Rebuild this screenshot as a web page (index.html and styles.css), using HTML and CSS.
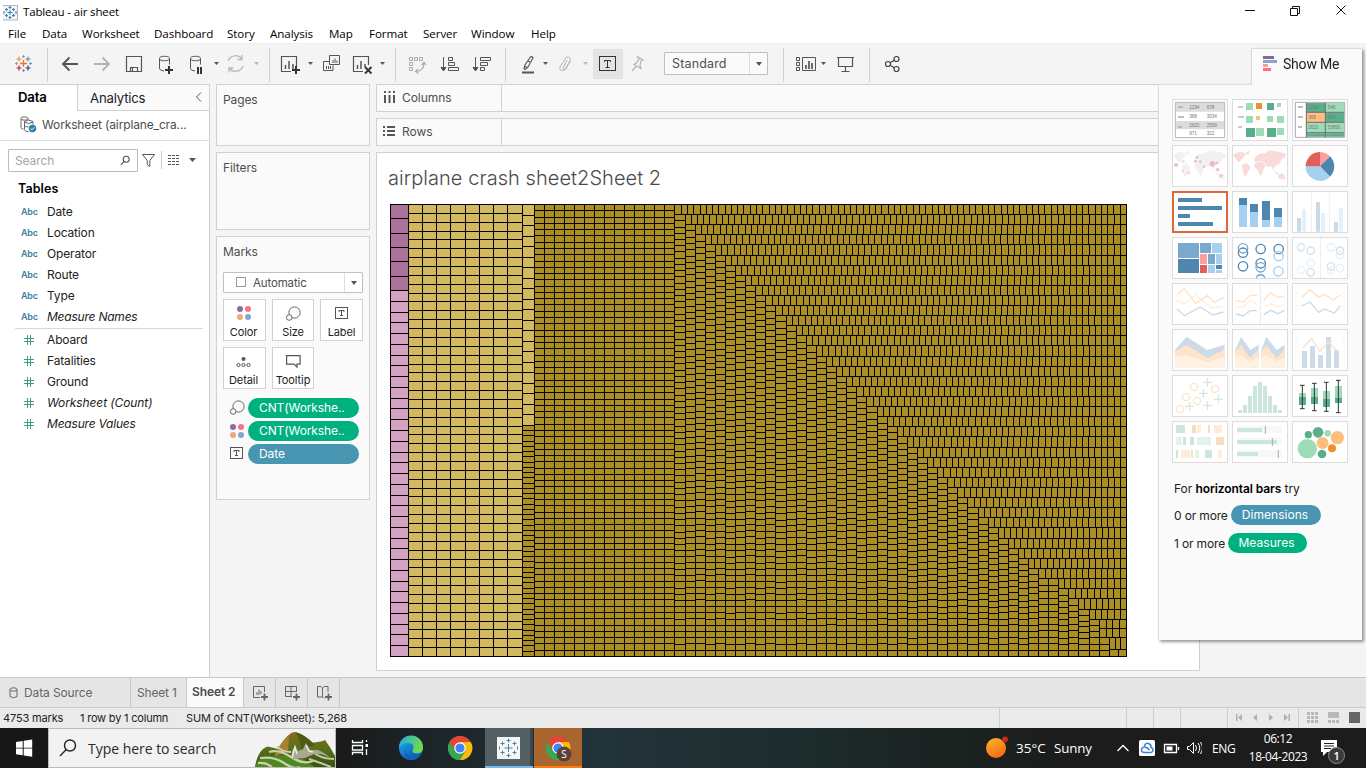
FILE: index.html
```html
<!DOCTYPE html>
<html lang="en">
<head>
<meta charset="utf-8">
<title>Tableau - air sheet</title>
<link rel="stylesheet" href="styles.css">
</head>
<body>
<svg width="0" height="0" class="defs">
  <defs>
    <g id="size"><circle cx="9.5" cy="6.5" r="5.6"/><circle cx="4.2" cy="11.5" r="2.8" fill="#fafafa"/></g>
    <g id="dots"><circle cx="3" cy="3" r="3" fill="#8a6f9a"/><circle cx="11" cy="3" r="3" fill="#fb7185"/><circle cx="3" cy="11" r="3" fill="#f4a57c"/><circle cx="11" cy="11" r="3" fill="#85a5cd"/></g>
    <g id="tbox"><rect x=".5" y=".5" width="12" height="11" fill="none" stroke="#555"/><path d="M4 5V3.500h5V5M6.500 3.500v5M5 8.500H8" fill="none" stroke="#555"/></g>
    <g id="chrome">
      <circle r="12" fill="#34a853"/><path d="M-10.4-6A12 12 0 0 1 10.4-6L0-6-5.2 3Z" fill="#ea4335"/><path d="M10.800-6A12 12 0 0 1 0 12L5.200 3 0-6Z" fill="#fbbc05"/><path d="M-10.400-6-5.200 3 0 6 5.200 3 0 12A12 12 0 0 1-10.400-6" fill="#34a853"/><circle r="5.8" fill="#fff"/><circle r="4.6" fill="#4285f4"/>
    </g>
    <g id="land">
      <path d="M8 26l14-6 14 2 6 5-6 8-8 9-6 8-6-4-7-10-6-6z"/><path d="M42 20l12-3-4 10-6 4z"/><path d="M30 60l12-6 13 12-5 12-8 14-5 3-4-16z"/><path d="M66 60l10-10 16 2 9 9-6 12-5 15-6 4-6-16-8-6z"/><path d="M66 48l2-10 12-12 20-2 10-8 30 4 22 6-2 10-10 6-8 14-12 6-6 14-6-12-12 2-10-14-12-4-14 4z"/><path d="M126 76l10 8 8 2-10 3z"/><path d="M138 92l12-8 10 8-4 13-8-4-8 1z"/>
    </g>
    <linearGradient id="sun" x1="0" y1="0" x2=".5" y2="1"><stop offset="0" stop-color="#f7b733"/><stop offset="1" stop-color="#f96d12"/></linearGradient>
    <linearGradient id="edge" x1="0" y1="0" x2=".6" y2="1"><stop offset="0" stop-color="#28b5e8"/><stop offset="1" stop-color="#0b57b5"/></linearGradient>
    <linearGradient id="wave" x1="0" y1="0" x2="1" y2=".3"><stop offset="0" stop-color="#1fa8ea"/><stop offset="1" stop-color="#6cda4c"/></linearGradient>
    <linearGradient id="grass" x1="0" y1="0" x2="0" y2="1"><stop offset="0" stop-color="#8a6a22"/><stop offset=".5" stop-color="#55701c"/><stop offset="1" stop-color="#35520f"/></linearGradient>
  </defs>
</svg>

<header class="titlebar">
  <svg class="app-icon" width="16" height="20" viewBox="0 0 16 20"><rect x="-.5" y="3.500" width="15" height="14.500" fill="#f6f6f6" stroke="#b5b5b5"/><path d="M7 8v5M4.500 10.500h5M7 4v3M5.500 5.500h3M7 14v3M5.500 15.500h3M3.500 6v3M2 7.500h3M10.500 6v3M9 7.500h3M3.500 12v3M2 13.500h3M10.500 12v3M9 13.500h3M1 9v3M13 9v3" stroke="#3a86b8" stroke-width="1.100"/></svg>
  <span class="app-name">Tableau - air sheet</span>
  <svg class="win-controls" width="140" height="23" viewBox="1226 0 140 23" fill="none" stroke="#111"><path d="M1245 10.500h10"/><path d="M1290.500 8.500h7v7h-7zM1292.500 8.500v-2h7v7h-2"/><path d="M1336.500 5.500l9 9M1345.500 5.500l-9 9"/></svg>
</header>

<nav class="menu">
  <span class="m1">File</span><span class="m2">Data</span><span class="m3">Worksheet</span><span class="m4">Dashboard</span><span class="m5">Story</span><span class="m6">Analysis</span><span class="m7">Map</span><span class="m8">Format</span><span class="m9">Server</span><span class="m10">Window</span><span class="m11">Help</span>
</nav>

<div class="toolbar">
  <svg class="grp" width="47" height="41" viewBox="0 43 47 41" fill="none">
    <path d="M23.500 60v7M20 63.500h7" stroke="#e8762c" stroke-width="1.300"/><path d="M19 56.500v5M16.500 59h5" stroke="#eb912b"/><path d="M28 56.500v5M25.500 59h5" stroke="#59879b"/><path d="M19 65.500v5M16.500 68h5" stroke="#c72035" stroke-width="1.200"/><path d="M28 65.500v5M25.500 68h5" stroke="#1f447e" stroke-width="1.200"/><path d="M23.500 55v3M22 56.500h3M16.500 62v3M15 63.500h3" stroke="#7fa8b8"/><path d="M30.500 62v3M29 63.500h3M23.500 69v3M22 70.500h3" stroke="#7199a6"/>
  </svg>
  <svg class="grp" width="222" height="41" viewBox="47 43 222 41" fill="none" stroke="#555">
    <path d="M78 64H63M69.500 57.500 63 64l6.500 6.500" stroke-width="1.900"/>
    <path d="M94 64h15M102.500 57.500 109 64l-6.500 6.500" stroke="#b4b4b4" stroke-width="1.900"/>
    <path d="M126.500 56.500h15v15h-15zM130.500 71.500v-4h7v4M132.500 68v3" stroke-width="1.200"/>
    <g id="db"><ellipse cx="164.500" cy="58.500" rx="5" ry="2.200"/><path d="M159.500 58.500v10q0 2 4.500 2.500M169.500 58.500v6"/></g><path d="M169 66v8M165 70h8" stroke="#333" stroke-width="2"/>
    <use href="#db" x="31"/><path d="M198 67v7M201 67v7" stroke="#333" stroke-width="2"/>
    <path d="M214 62h5l-2.500 3z" fill="#555" stroke="none"/>
    <path d="M228 61a8 8 0 0 1 14-2M243 66a8 8 0 0 1-14 2M242 55v4.500h-4.500M229 72.500V68h4.500" stroke="#b8b8b8" stroke-width="1.300"/>
    <path d="M254 62h5l-2.500 3z" fill="#b8b8b8" stroke="none"/>
  </svg>
  <svg class="grp" width="126" height="41" viewBox="269 43 126 41" fill="none" stroke="#555">
    <path d="M291 71.500h-9.500v-15h15V67" stroke-width="1.200"/><path d="M285.500 69v-4M289 69v-8M293 69v-5" stroke-width="1.500"/><path d="M296 66v8M292 70h8" stroke="#333" stroke-width="2"/><path d="M308 62h5l-2.500 3z" fill="#555" stroke="none"/>
    <path d="M329.500 55.500h10v9h-10zM329 61.500h-5.500v9h9.500v-5M333 63v-3M335 63v-4.500M337 63v-2.500M326.500 69v-3M328.500 69v-3M330.500 69v-3"/>
    <path d="M363 71.500h-9.500v-15h15V65" stroke-width="1.200"/><path d="M357.500 69v-4M361 69v-8M365 67v-3" stroke-width="1.500"/><path d="M365 67l6.500 6.500M371.500 67l-6.500 6.500" stroke="#333" stroke-width="1.900"/><path d="M380 62h5l-2.500 3z" fill="#555" stroke="none"/>
  </svg>
  <svg class="grp" width="110" height="41" viewBox="395 43 110 41" fill="none" stroke="#555">
    <g stroke="#aaa"><path d="M409.500 57.500h3v3h-3zM414.500 57.500h3v3h-3zM419.500 57.500h3v3h-3zM409.500 62.500h3v3h-3zM409.500 67.500h3v3h-3z"/><path d="M424 63c0 5-3 8-8 8.500M421.500 65l2.500-2.500 2 2.500M418 69l-2.500 2.500 3 2" stroke-width="1.200"/></g>
    <path d="M443.500 57v13M441 67.500h5l-2.500 3.500z" fill="#555"/><path d="M448.500 57.500h4v3h-4zM448.500 62.500h6v3h-6zM448.500 67.500h10v3h-10z"/>
    <path d="M475.500 57v13M473 67.500h5l-2.500 3.500z" fill="#555"/><path d="M480.500 57.500h10v3h-10zM480.500 62.500h7v3h-7zM480.500 67.500h4v3h-4z"/>
  </svg>
  <svg class="grp" width="159" height="41" viewBox="505 43 159 41" fill="none" stroke="#555">
    <path d="M530 57.500q2-2 3 .5l-5 9-3 2.500-1-1 1-3.500zM524.500 66l3.500 2M528 61l3 1.500" stroke-width="1.100"/><path d="M522 72.500h12" stroke-width="2"/><path d="M543 62h5l-2.500 3z" fill="#555" stroke="none"/>
    <path d="M567 60l-4 8q0 3 2.500 1.500l5-9q0-4-4-3.500l-6 9q-2 4 1 4.500t5-3.500l4-7" stroke="#b4b4b4"/><path d="M583 62h5l-2.500 3z" fill="#b8b8b8" stroke="none"/>
    <path d="M593 49h30v30h-30z" fill="#e4e4e4" stroke="none"/><rect x="599.500" y="56.500" width="16" height="14" stroke="#333"/><path d="M604.500 62v-1.500h6V62M607.500 60v8M605.500 67.500h4" stroke="#333"/>
    <path d="M637 56.500l6 3.500-2 1-1 4 1 3.500-7-4 3-2 2-4zM636.500 66l-4.500 5" stroke="#b4b4b4" stroke-width="1.200"/>
  </svg>
  <div class="select std"><span>Standard</span><i></i></div>
  <svg class="grp" width="86" height="41" viewBox="783 43 86 41" fill="none" stroke="#555"><path d="M796.500 57.500h3v3h-3zM796.500 62.500h3v3h-3zM796.500 67.500h3v3h-3zM802.500 57.500h13v13h-13z"/><path d="M806 69v-4M809 69v-8M812 69v-6" stroke-width="1.700"/><path d="M821 62h5l-2.500 3z" fill="#555" stroke="none"/><path d="M837 57.500h17M838.500 58v8.500h14V58M845.500 67v4.500M841.500 71.500h8" stroke-width="1.200"/></svg>
  <svg class="grp" width="40" height="41" viewBox="869 43 40 41" fill="none" stroke="#444" stroke-width="1.200"><circle cx="888" cy="64" r="2.500"/><circle cx="896.500" cy="59" r="2.500"/><circle cx="896.500" cy="69" r="2.500"/><path d="M890.200 62.800l4-2.500M890.200 65.200l4 2.500"/></svg>
</div>

<main class="work">
  <aside class="side">
    <div class="side-tabs"><b>Data</b><span>Analytics<svg width="8" height="12" viewBox="0 0 8 12" fill="none" stroke="#555"><path d="M6 .5 1.500 5 6 9.500"/></svg></span></div>
    <div class="source"><svg width="17" height="17" viewBox="0 0 17 17" fill="none" stroke="#666"><ellipse cx="4.500" cy="2.500" rx="3.500" ry="1.700"/><path d="M1 2.500v9q0 1.500 2.500 1.700M8 2.500v1M4.500 5.500v8q0 2 4 2.300M4.500 5.500q4-3 8.500 0v3M4.500 6q4 3 8.500 0M4.500 10q2 1 4 1"/><circle cx="12.500" cy="12.500" r="3.700" fill="#2d7fa3" stroke="none"/><path d="M10.700 12.500l1.300 1.300 2.300-2.500" stroke="#fff"/></svg><span>Worksheet (airplane_cra...</span></div>
    <div class="search-row">
      <div class="search"><span>Search</span><svg width="11" height="11" viewBox="0 0 11 11" fill="none" stroke="#555" stroke-width="1.100"><circle cx="6.200" cy="4.200" r="3"/><path d="M4.200 6.400.8 9.800"/></svg></div>
      <svg width="60" height="24" viewBox="141 149 60 24" fill="none" stroke="#555"><path d="M142.500 154.500h12l-4.700 6v6l-2.600-2v-4z"/><path d="M161.500 151v18" stroke="#ccc"/><path d="M168 155.500h12M168 158.500h12M168 161.500h12M168 164.500h12" stroke-dasharray="3 1"/><path d="M189 158h7l-3.500 4z" fill="#555" stroke="none"/></svg>
    </div>
    <h2>Tables</h2>
    <ul class="fields dims">
      <li><em>Abc</em>Date</li><li><em>Abc</em>Location</li><li><em>Abc</em>Operator</li><li><em>Abc</em>Route</li><li><em>Abc</em>Type</li><li class="it"><em>Abc</em>Measure Names</li>
    </ul>
    <ul class="fields">
      <li><svg class="hash" viewBox="0 0 10 10"><path d="M3.500 0v10M6.500 0v10M0 3.500h10M0 6.500h10"/></svg>Aboard</li><li><svg class="hash" viewBox="0 0 10 10"><path d="M3.500 0v10M6.500 0v10M0 3.500h10M0 6.500h10"/></svg>Fatalities</li><li><svg class="hash" viewBox="0 0 10 10"><path d="M3.500 0v10M6.500 0v10M0 3.500h10M0 6.500h10"/></svg>Ground</li><li class="it wc"><svg class="hash" viewBox="0 0 10 10"><path d="M3.500 0v10M6.500 0v10M0 3.500h10M0 6.500h10"/></svg>Worksheet (Count)</li><li class="it"><svg class="hash" viewBox="0 0 10 10"><path d="M3.500 0v10M6.500 0v10M0 3.500h10M0 6.500h10"/></svg>Measure Values</li>
    </ul>
  </aside>

  <section class="cards">
    <div class="card pages">Pages</div>
    <div class="card filters">Filters</div>
    <div class="card marks">Marks
      <div class="select auto"><svg width="11" height="11"><rect x=".5" y=".5" width="9" height="9" fill="none" stroke="#999"/></svg><span>Automatic</span><i></i></div>
      <div class="mark-grid">
        <div><svg width="14" height="14"><use href="#dots"/></svg>Color</div>
        <div><svg width="16" height="15" fill="none" stroke="#666"><use href="#size"/></svg>Size</div>
        <div><svg class="lb" width="14" height="13"><use href="#tbox"/></svg>Label</div>
        <div><svg class="dt" width="15" height="12" fill="none" stroke="#555"><circle cx="7.500" cy="3" r="2" fill="#555" stroke="none"/><circle cx="2.500" cy="9" r="1.600"/><circle cx="7.500" cy="9" r="1.600"/><circle cx="12.500" cy="9" r="1.600"/></svg>Detail</div>
        <div><svg class="lb" width="15" height="13" fill="none" stroke="#555" stroke-width="1.200"><path d="M.6.6h13.500v8.500H11v3L8 9.100H.6z"/></svg>Tooltip</div>
      </div>
      <div class="pills">
        <div><svg width="16" height="15" fill="none" stroke="#666"><use href="#size"/></svg><span class="pill g">CNT(Workshe..</span></div>
        <div><svg width="16" height="14" viewBox="-1 0 16 14"><use href="#dots"/></svg><span class="pill g">CNT(Workshe..</span></div>
        <div><svg width="16" height="13" viewBox="-1 0 16 13"><use href="#tbox"/></svg><span class="pill b">Date</span></div>
      </div>
    </div>
  </section>

  <section class="canvas">
    <div class="shelf"><label><svg width="14" height="13" stroke="#555" stroke-width="2"><path d="M1 0v2M5.500 0v2M10 0v2M1 4v8M5.500 4v8M10 4v8"/></svg>Columns</label></div>
    <div class="shelf"><label><svg class="ri" width="14" height="11" stroke="#555" stroke-width="2"><path d="M0 1h2M0 5h2M0 9h2M4 1h8M4 5h8M4 9h8"/></svg>Rows</label></div>
    <div class="view">
      <h1>airplane crash sheet2Sheet 2</h1>
      <canvas id="treemap" width="737" height="453"></canvas>
    </div>
  </section>

  <section class="showme">
    <div class="sm-tab"><svg width="15" height="16"><path d="M0 0h11v3H0z" fill="#856a96"/><path d="M0 4h14v3H0z" fill="#85a5cd"/><path d="M0 8h5v3H0z" fill="#f4a57c"/><path d="M0 12h8v3H0z" fill="#fb7185"/></svg>Show Me</div>
    <div class="sm-body">
      <div class="thumbs" id="thumbs">
        <svg viewBox="0 0 168 126"><path d="M10 10h148v106H10z" fill="#fff" stroke="#b4b4b4" stroke-width="3"/><path d="M12 12h144v26H12zM12 66h144v25H12z" fill="#dcdcdc"/><path d="M18 24h15M18 54h18M18 84h12" stroke="#aaa" stroke-width="5"/><g class="tt"><text x="52" y="30">1234</text><text x="104" y="30">678</text><text x="52" y="58">368</text><text x="104" y="58">3034</text><text x="52" y="85">2620</text><text x="104" y="85">2559</text><text x="52" y="108">971</text><text x="104" y="108">322</text></g></svg>
        <svg viewBox="0 0 168 126"><path d="M18 24h15M18 54h18M18 84h12" stroke="#bbb" stroke-width="5"/><path d="M42 12h21v21H42zM135 12h12v12h-12zM42 51h21v21H42zM105 51h18v18h-18zM135 51h21v21h-21zM72 87h24v24H72zM135 87h21v21h-21z" fill="#9edcb8"/><path d="M105 12h21v21h-21zM42 87h27v27H42zM105 87h27v27h-27z" fill="#59ae8b"/><path d="M72 12h18v18H72z" fill="#f28e2b"/><path d="M72 51h12v12H72z" fill="#ffbe7d"/></svg>
        <svg viewBox="0 0 168 126"><path d="M10 10h148v105H10z" fill="#fff" stroke="#aaa" stroke-width="3"/><path d="M44 12h55v27H44zM101 42h55v27h-55zM44 103h55v10H44zM101 103h55v10h-55z" fill="#59ae8b"/><path d="M101 12h55v27h-55zM44 72h55v28H44zM101 72h55v28h-55z" fill="#9edcb8"/><path d="M44 42h55v27H44z" fill="#ffbe7d"/><path d="M43 40h114M43 70h114M43 101h114M100 11v104M43 11v104" stroke="#666" stroke-width="3"/><path d="M18 24h15M18 54h15M18 84h12" stroke="#aaa" stroke-width="5"/><g class="tt"><text x="49" y="30">1234</text><text x="107" y="30">546</text><text x="49" y="60">368</text><text x="107" y="60">340</text><text x="49" y="91">2620</text><text x="107" y="91">53890</text></g></svg>
        <svg viewBox="0 0 168 126"><use href="#land" fill="#f1f1f1"/><g fill="#e8a9ae" opacity=".75"><circle cx="12" cy="60" r="6"/><circle cx="34" cy="49" r="5" opacity=".5"/><circle cx="75" cy="37" r="4"/><circle cx="85" cy="50" r="4"/><circle cx="71" cy="49" r="4"/><circle cx="121" cy="56" r="8"/><circle cx="137" cy="74" r="5"/><circle cx="134" cy="54" r="4"/><circle cx="147" cy="92" r="4"/><circle cx="50" cy="83" r="5" opacity=".6"/><circle cx="32" cy="78" r="4" opacity=".6"/><circle cx="96" cy="65" r="4"/></g></svg>
        <svg viewBox="0 0 168 126"><use href="#land" fill="#fbdada"/></svg>
        <svg viewBox="0 0 168 126"><path d="M84 64V21A43 43 0 0 1 114 34z" fill="#ff9d9a"/><path d="M84 64l30-30a43 43 0 0 1 0 61z" fill="#4f86b0"/><path d="M84 64l30 31A43 43 0 0 1 41 64z" fill="#a5d0ef"/><path d="M84 64H41A43 43 0 0 1 84 21z" fill="#e1615a"/></svg>
        <svg class="on" viewBox="0 0 168 126"><path d="M18 21h72v12H18zM18 45h132v12H18zM18 69h36v12H18zM18 93h105v12H18z" fill="#4f86b0"/></svg>
        <svg viewBox="0 0 168 126"><path d="M21 42h24v66H21zM54 63h24v45H54zM90 87h24v21H90zM126 78h24v30h-24z" fill="#a5d0ef"/><path d="M21 21h24v21H21zM54 39h24v24H54zM90 30h24v57H90zM126 51h24v27h-24z" fill="#4f86b0"/></svg>
        <svg viewBox="0 0 168 126"><path d="M58 3v120M112 3v120" stroke="#eee" stroke-width="3"/><path d="M15 81h12v41H15zM72 33h12v89H72zM126 93h12v29h-12z" fill="#cbdae7"/><path d="M30 54h12v68H30zM87 66h12v56H87zM141 51h12v71h-12z" fill="#e2f1fb"/></svg>
        <svg viewBox="0 0 168 126"><path d="M18 18h63v45H18zM84 18h33v30H84zM108 51h21v30h-21z" fill="#7aa9d0"/><path d="M120 18h30v30h-30zM132 51h18v30h-18zM108 84h21v24h-21zM132 99h18v9h-18z" fill="#a5d0ef"/><path d="M18 66h63v42H18zM132 84h18v12h-18z" fill="#4f86b0"/><path d="M84 51h21v30H84z" fill="#ff9d9a"/><path d="M84 84h21v24H84z" fill="#e1615a"/></svg>
        <svg viewBox="0 0 168 126" fill="none" stroke-width="4"><g stroke="#4f86b0"><circle cx="33" cy="47" r="14"/><circle cx="33" cy="88" r="14"/><circle cx="86" cy="36" r="14"/><circle cx="86" cy="79" r="14"/><circle cx="140" cy="36" r="14"/></g><g stroke="#a5d0ef"><circle cx="140" cy="57" r="14"/><circle cx="139" cy="103" r="14"/></g><g stroke="#7aa9d0"><circle cx="33" cy="34" r="14"/><circle cx="86" cy="91" r="14"/><path d="M73 122a14 14 0 0 1 26 0"/></g></svg>
        <svg viewBox="0 0 168 126" fill="none" stroke-width="4"><path d="M86 3v120" stroke="#eee" stroke-width="3"/><g stroke="#d3e0ec"><circle cx="27" cy="30" r="11"/><circle cx="56" cy="41" r="11"/><circle cx="56" cy="106" r="11"/><circle cx="144" cy="41" r="11"/><circle cx="117" cy="88" r="11"/></g><g stroke="#e4f1fa"><circle cx="27" cy="33" r="11"/><circle cx="56" cy="78" r="11"/><circle cx="27" cy="99" r="11"/><circle cx="117" cy="31" r="11"/><circle cx="144" cy="54" r="11"/><circle cx="117" cy="100" r="11"/><circle cx="144" cy="94" r="11"/></g></svg>
        <svg viewBox="0 0 168 126" fill="none" stroke-width="4"><path d="M15 54l22 8 33-25 50 38 34-5" stroke="#ffefd4"/><path d="M15 35l22-18 34 44 35-23 21 20 27-14" stroke="#fde2c6"/><path d="M15 77l22 21 48-26 37 24 32-9" stroke="#cddbe8"/></svg>
        <svg viewBox="0 0 168 126" fill="none" stroke-width="4"><path d="M85 3v120" stroke="#e8e8e8" stroke-width="3"/><path d="M12 73l22-1 21-21 20 14M95 72l22-9 20 9 20-8" stroke="#ffefd4"/><path d="M12 52l22 5 20-20 21-1M95 53l20-24 22 14 20-3" stroke="#fde2c6"/><path d="M12 93l22 6 20-16h21M95 95l22-13 20 10 20-9" stroke="#cddbe8"/></svg>
        <svg viewBox="0 0 168 126" fill="none" stroke-width="4"><path d="M12 14v98M156 14v98" stroke="#eee" stroke-width="8" stroke-dasharray="2 11"/><path d="M28 44l26-24 26 23 18-9 26 17 21-15" stroke="#fde2c6"/><path d="M28 69l26-12 26 31 17-10 30 12 18-21" stroke="#cddbe8"/></svg>
        <svg viewBox="0 0 168 126"><path d="M9 63l35-40 62 40 52-16v68H9z" fill="#cddbe8"/><path d="M9 67l35-19 62 39 52-26v54H9z" fill="#fde4ca"/><path d="M9 84l35-5 62 19 52-14v32H9z" fill="#fff2e2"/></svg>
        <svg viewBox="0 0 168 126"><path d="M9 66l18-43 28 40 25-16v69H9zM87 66l16-43 31 40 24-16v69H87z" fill="#cddbe8"/><path d="M9 69l18-21 28 40 25-28v56H9zM87 69l16-21 31 40 24-28v56H87z" fill="#fde4ca"/><path d="M9 86l18-7 28 19 25-14v32H9zM87 86l16-7 31 19 24-14v32H87z" fill="#fff2e2"/></svg>
        <svg viewBox="0 0 168 126"><path d="M12 14v98M156 14v98" stroke="#eee" stroke-width="8" stroke-dasharray="2 11"/><path d="M30 66h15v51H30zM54 51h15v66H54zM78 78h15v39H78zM102 24h15v93h-15zM126 63h15v54h-15z" fill="#cddbe8"/><path d="M33 56l26-27 25 38 25-29 27 28" fill="none" stroke="#fde2c6" stroke-width="4"/></svg>
        <svg viewBox="0 0 168 126" fill="none" stroke-width="4"><g stroke="#fde4ca"><circle cx="66" cy="36" r="11"/><circle cx="42" cy="66" r="11"/><circle cx="75" cy="78" r="11"/><circle cx="24" cy="102" r="11"/><circle cx="129" cy="42" r="11"/></g><path d="M106 9v27M93 22h27M94 42v27M81 55h27M140 59v27M126 73h27M106 78v27M93 91h27M53 81v27M39 94h27" stroke="#c8e4d8" stroke-width="3"/></svg>
        <svg viewBox="0 0 168 126"><path d="M18 105h12v9H18zM33 90h12v24H33zM48 63h12v51H48zM63 33h12v81H63zM78 21h12v93H78zM93 33h12v81H93zM108 63h12v51h-12zM123 90h12v24h-12zM138 105h12v9h-12z" fill="#cbe6da"/></svg>
        <svg viewBox="0 0 168 126"><path d="M21 54h21v12H21zM57 39h21v27H57zM93 48h21v24H93zM129 33h21v36h-21z" fill="#9edcb8"/><path d="M21 66h21v24H21zM57 66h21v21H57zM93 72h21v24H93zM129 69h21v15h-21z" fill="#59ae8b"/><path d="M31 30v71M67 25v82M103 22v87M139 16v97M24 31h14M60 25h14M96 22h14M132 16h14M24 101h14M60 107h14M96 109h14M132 113h14" stroke="#333" stroke-width="3"/></svg>
        <svg viewBox="0 0 168 126"><path d="M12 12h27v24H12zM33 48h9v24h-9zM54 48h12v24H54zM12 87h6v24h-6zM99 87h21v24H99z" fill="#cbe6da"/><path d="M12 48h18v24H12zM75 48h42v24H75zM48 87h6v24h-6zM69 87h12v24H69z" fill="#e2f4ea"/><path d="M60 12h12v24H60zM108 12h6v24h-6zM132 48h24v24h-24zM57 87h6v24h-6z" fill="#fcdcc0"/><path d="M75 12h12v24H75zM126 12h24v24h-24zM27 87h24v24H27zM138 87h12v24h-12z" fill="#feecd9"/></svg>
        <svg viewBox="0 0 168 126"><path d="M15 15h135v21H15zM15 51h135v21H15zM15 87h135v21H15z" fill="#f7f7f7"/><path d="M15 21h75v12H15zM15 57h120v12H15zM15 93h63v12H15z" fill="#cbe6da"/><path d="M100 15v24M121 51v24M139 87v24" stroke="#aaa" stroke-width="3"/></svg>
        <svg viewBox="0 0 168 126"><g fill="#9edcb8"><circle cx="46" cy="83" r="29"/><circle cx="107" cy="37" r="10"/></g><g fill="#59ae8b"><circle cx="49" cy="41" r="11"/><circle cx="78" cy="34" r="16"/><circle cx="90" cy="99" r="13"/></g><g fill="#ffbe7d"><circle cx="136" cy="50" r="20"/><circle cx="92" cy="66" r="18"/></g><circle cx="120" cy="82" r="12" fill="#f28e2b"/></svg>
      </div>
      <p class="hint h1">For <b>horizontal bars</b> try</p>
      <p class="hint"><span class="q0">0 or more</span><span class="pill b dm">Dimensions</span></p>
      <p class="hint"><span class="q1">1 or more</span><span class="pill g ms">Measures</span></p>
    </div>
  </section>
</main>

<div class="tabs">
  <div class="t-ds"><svg width="9" height="12" fill="none" stroke="#666"><ellipse cx="4.500" cy="2.500" rx="3.500" ry="1.700"/><path d="M1 2.500v7q3.500 2.600 7 0v-7"/></svg>Data Source</div>
  <div class="t-s1">Sheet 1</div>
  <div class="t-s2">Sheet 2</div>
  <div class="t-i"><svg width="16" height="16" fill="none" stroke="#666"><path d="M8 12.500H1.500v-11h11V7M5 10V7M7 10V4.500M9 9V6"/><path d="M12.500 8.500v7M9 12h7" stroke-width="1.800"/></svg></div>
  <div class="t-i"><svg width="16" height="16" fill="none" stroke="#666"><path d="M8 11.500H1.500v-10h11V7M7 1.500v10M1.500 6.500h11"/><path d="M12.500 8.500v7M9 12h7" stroke-width="1.800"/></svg></div>
  <div class="t-i"><svg width="16" height="16" fill="none" stroke="#666"><path d="M8 13.500l-1.500-1.500h-5v-10.500h3.500l1.500 1.500 1.500-1.500h4v5.500M6.500 3v9"/><path d="M12.500 8.500v7M9 12h7" stroke-width="1.800"/></svg></div>
</div>

<div class="status">
  <span class="s1">4753 marks</span><span class="s2">1 row by 1 column</span><span class="s3">SUM of CNT(Worksheet): 5,268</span>
  <svg width="368" height="20" viewBox="998 708 368 20"><path d="M999.500 708v20M1126.500 708v20M1153.500 708v20M1180.500 708v20M1227.500 708v20M1298.500 708v20" stroke="#ccc"/><path d="M1236 714h1.500v7h-1.500zM1242 714v7l-4-3.500zM1257 714v7l-4-3.500zM1269 714v7l4-3.500zM1284 714v7l4-3.500zM1288.500 714h1.500v7h-1.500z" fill="#b0b0b0"/><path d="M1307 713.500h11M1307 717.500h11M1307 721.500h11" stroke="#b8b8b8" stroke-width="3" stroke-dasharray="3 1"/><path d="M1328 712h11v6h-11z" fill="#b8b8b8"/><path d="M1328 721.500h11" stroke="#b8b8b8" stroke-width="3" stroke-dasharray="3 1"/><path d="M1349 712h11v11h-11z" fill="#666"/></svg>
</div>

<footer class="taskbar">
  <svg class="start" width="48" height="40"><path d="M16 14l6.700-1v6.700H16zM23.700 12.800l8.500-1.300v8.200h-8.500zM16 20.600h6.700v6.700l-6.700-1zM23.700 20.600h8.500v8.200l-8.500-1.300z" fill="#fff"/></svg>
  <div class="tb-search"><svg width="18" height="20" fill="none" stroke="#222" stroke-width="1.400"><circle cx="11" cy="7.500" r="5.500"/><path d="M7.200 11.500 1 18"/></svg><span>Type here to search</span>
    <svg class="hill" width="80" height="35" viewBox="0 0 80 35"><path d="M0 35Q3 17 13 14.500l10 2.500Q33 0 40 0q8 3 13 11 14-1 17-3 6 8 10 16v11z" fill="url(#grass)"/><path d="M40 0Q46 8 46 18l14-5Q50 2 40 0z" fill="#4a5c16"/><path d="M34 4q-8 6-11 13l-4 8 14-6z" fill="#a9812f"/><path d="M0 35q2-8 8-9l24-3 16 4 12 8z" fill="#4c8a1c"/><path d="M22 14q4 6 14 6M14 20q10-3 22 5t22 4M5 26q14-2 24 5t16 4M3 31q8-1 14 4" fill="none" stroke="#cfcdb2" stroke-width="2.200"/><path d="M59 21q8 6 20 6M54 27q12 4 22 8" fill="none" stroke="#c9c7a4" stroke-width="2"/><path d="M36 27l1-8 3-5 3 5 5-2 3-6 4 7 8 0q8 3 13 9-8-6-17-5l-9 4z" fill="#a9a892"/><path d="M37 26l3-11 2 7M51 13l3 6 4 1" fill="none" stroke="#eeece0" stroke-width="1.500"/></svg></div>
  <svg class="apps" width="246" height="40" viewBox="336 728 246 40">
    <path d="M485 728h45v40h-45z" fill="#536066"/><path d="M530 728h3v40h-3z" fill="#3a464b"/><path d="M485 766h48v2h-48z" fill="#76b9ed"/><path d="M534 728h48v40h-48z" fill="#a8662e"/><path d="M534 766h48v2h-48z" fill="#ff7a0c"/>
    <path d="M352.500 740v2.500h10V740M352.500 755v-2.500h10v2.500M352.500 745.500h10v4.500h-10zM366.500 740v2M366.500 749v6" fill="none" stroke="#fff" stroke-width="1.300"/><path d="M365.500 744h2.500v3h-2.500z" fill="#fff"/>
    <circle cx="411" cy="748" r="12" fill="url(#edge)"/><path d="M399 747a12 12 0 0 1 24 1q0 5-6 5.500-6 0-4-4.500 2-6-5-6-5 0-9 4" fill="url(#wave)"/><path d="M407 746q-6 12 13 10-4 4-9 4-10-3-4-14" fill="#1263b7"/>
    <use href="#chrome" x="460" y="748"/>
    <path d="M497 737h23v22h-23z" fill="#f6f6f6"/><path d="M508.500 744v8M504.500 748h8M508.500 738.500v4M506.500 740.500h4M508.500 753.500v4M506.500 755.500h4M502.500 741.500v4M500.500 743.500h4M514.500 741.500v4M512.500 743.500h4M502.500 750.500v4M500.500 752.500h4M514.500 750.500v4M512.500 752.500h4M499.500 746.500v3M517.500 746.500v3" stroke="#4884a6"/>
    <use href="#chrome" x="558" y="748"/><circle cx="564" cy="754" r="7.500" fill="#5d4037"/><text x="561.200" y="758" class="badge-s">S</text>
  </svg>
  <div class="tray">
    <svg width="26" height="24"><circle cx="11" cy="12" r="10" fill="url(#sun)"/><circle cx="20" cy="3.500" r="3" fill="#c42b1c"/></svg>
    <span class="w1">35°C</span><span class="w2">Sunny</span>
    <svg class="sys" width="88" height="24" viewBox="1114 736 88 24" fill="none" stroke="#fff" stroke-width="1.300"><path d="M1117.500 751l5.500-5.500 5.500 5.500"/><rect x="1139" y="740" width="16" height="16" rx="1.500" fill="#fff" stroke="none"/><path d="M1144.500 746q1-3.500 4-2.500 3 1 2.500 4 3 1 1.500 4-.5 1-2 1h-6.500q-3-.5-2.500-3.500 1-2.500 3.500-2 2.500.5 4.500 3" stroke="#3b82d6" stroke-width="1.500"/><path d="M1164.500 744.500h12v8h-12zM1178.500 747v3"/><path d="M1166.500 746.500h6v4h-6z" fill="#fff" stroke="none"/><path d="M1187.500 746.500h2l4-4v11l-4-4h-2zM1195.500 745q2 3 0 6M1198 743q3.500 5 0 10M1200.500 742q4 6 0 12" stroke-width="1"/></svg>
    <span class="lang">ENG</span>
    <span class="clock"><b>06:12</b><b>18-04-2023</b></span>
    <svg class="notif" width="36" height="40" viewBox="1320 728 36 40"><path d="M1325 740h16v12h-10l-4 4v-4h-2z" fill="#fff"/><path d="M1328 743.500h10M1328 746h10M1328 748.500h7" stroke="#222"/><circle cx="1340.500" cy="755.500" r="8" fill="#3a3a3a" stroke="#8a8a8a"/><text x="1337.500" y="759.500" class="badge-1">1</text></svg>
  </div>
</footer>
<script src="treemap.js"></script>
</body>
</html>
```
FILE: styles.css
```css
* { box-sizing: border-box; }
body { margin: 0; width: 1366px; height: 768px; overflow: hidden; display: flex; flex-direction: column; background: #fff; font-family: Inter, "Liberation Sans", sans-serif; font-size: 12px; color: #4e4e4e; }
svg { flex: none; display: block; }
.defs { position: absolute; }
h1, h2, p, ul { margin: 0; padding: 0; font-weight: 400; }

.titlebar { height: 23px; flex: none; display: flex; align-items: center; padding-left: 3px; font: 11.5px "Open Sans", sans-serif; color: #000; }
.app-icon { margin-right: 4px; }
.app-name { letter-spacing: -.15px; }
.win-controls { margin-left: auto; }
.menu { height: 20px; flex: none; display: flex; font: 11.6px/21px "Open Sans", sans-serif; color: #000; padding-left: 8px; letter-spacing: -.07px; }
.menu span { white-space: nowrap; }
.m1 { width: 34px; } .m2 { width: 40px; } .m3 { width: 72px; } .m4 { width: 73px; } .m5 { width: 43px; } .m6 { width: 59px; } .m7 { width: 40px; } .m8 { width: 54px; } .m9 { width: 48px; } .m10 { width: 60px; }

.toolbar { height: 41px; flex: none; display: flex; background: #f4f4f4; border-top: 1px solid #eee; }
.grp { margin-top: -1px; }
.toolbar .grp + .grp, .std + .grp { background: linear-gradient(#cfcfcf, #cfcfcf) 0 5px / 1px 34px no-repeat; }
.select { display: flex; align-items: center; background: #fafafa; border: 1px solid #c0c0c0; border-radius: 1px; }
.select i { margin-left: auto; width: 18px; height: 100%; border-left: 1px solid #ddd; display: flex; align-items: center; justify-content: center; }
.select i::after { content: ""; border: 3.5px solid transparent; border-top: 4px solid #555; border-bottom: 0; }
.std { width: 104px; height: 23px; margin: 8px 15px 0 0; padding-left: 7px; font-size: 12.5px; letter-spacing: .15px; }

.work { flex: none; height: 593px; display: flex; position: relative; background: #f4f4f4; }
.side { width: 210px; background: #fff; border-right: 1px solid #d0d0d0; border-top: 1px solid #d0d0d0; color: #222; }
.side-tabs { display: flex; height: 26px; font-size: 13.2px; line-height: 24px; }
.side-tabs b { width: 77px; padding-left: 18px; font-weight: 600; color: #000; letter-spacing: -.15px; }
.side-tabs span { flex: 1; display: flex; align-items: center; justify-content: space-between; padding: 0 6px 0 12px; background: #fafafa; border: solid #d0d0d0; border-width: 0 0 1px 1px; letter-spacing: -.2px; }
.source { height: 30px; border-bottom: 1px solid #ddd; display: flex; align-items: center; padding: 0 0 2px 20px; gap: 5px; color: #4e4e4e; letter-spacing: -.14px; white-space: nowrap; }
.search-row { display: flex; padding: 8px 0 0 8px; gap: 3px; height: 32px; }
.search { width: 130px; height: 23px; border: 1px solid #bbb; border-radius: 1px; display: flex; align-items: center; justify-content: space-between; padding: 0 6px 0 6px; color: #a5a5a5; letter-spacing: -.1px; }
.side h2 { padding-left: 18px; font-size: 12.5px; font-weight: 600; color: #000; line-height: 31px; height: 28px; letter-spacing: .1px; }
.fields { list-style: none; }
.fields li { display: flex; align-items: center; height: 21px; padding-left: 21px; font-size: 12px; letter-spacing: -.15px; }
.fields em { width: 26px; font-size: 9px; font-weight: 600; font-style: normal; color: #3f7f9f; letter-spacing: -.2px; }
.fields .it { padding-bottom: 0; letter-spacing: -.2px; }
.it { font-style: italic; }
.dims { height: 128px; background: linear-gradient(#d8d8d8, #d8d8d8) 15px 100% / 188px 1px no-repeat; }
.fields.dims .it { letter-spacing: -.22px; }
.fields .wc { letter-spacing: -.1px; }
.hash { width: 10px; height: 10px; margin: 0 13px 0 3px; stroke: #3f9f7a; }

.cards { width: 154px; margin-left: 6px; display: flex; flex-direction: column; gap: 6px; }
.card { border: 1px solid #d0d0d0; background: #fafafa; padding: 7px 6px; line-height: 15px; font-size: 12px; letter-spacing: -.1px; }
.pages { height: 62px; } .filters { height: 78px; } .marks { height: 264px; }
.auto { height: 21px; margin-top: 13px; padding-left: 12px; font-size: 11.5px; background: #fff; width: 140px; }
.auto span { margin: 1px 0 0 6px; letter-spacing: -.15px; }
.mark-grid { display: grid; grid-template-columns: 43px 42px 43px; gap: 6px; margin-top: 6px; }
.mark-grid div { height: 42px; border: 1px solid #d0d0d0; background: #fff; display: flex; flex-direction: column; align-items: center; justify-content: space-between; padding: 6px 0 1px; font-size: 11px; line-height: 14px; color: #222; }
.mark-grid div:first-child, .mark-grid div:nth-child(4) { padding-right: 2px; }
.mark-grid .lb { margin-top: 1px; } .mark-grid .dt { margin-top: 2px; }
.pills { margin-top: 7px; }
.pills div { display: flex; align-items: center; height: 23px; padding-left: 6px; gap: 3px; }
.pill { height: 20px; border-radius: 10px; color: #fff; line-height: 19px; padding: 0 10px 0 11px; display: inline-block; letter-spacing: -.1px; }
.pills .pill { width: 111px; }
.g { background: #00b180; } .b { background: #4996b2; }

.canvas { width: 824px; margin-left: 6px; display: flex; flex-direction: column; gap: 6px; }
.shelf { height: 28px; border: 1px solid #d0d0d0; background: #fafafa; display: flex; }
.shelf label { width: 125px; border-right: 1px solid #d0d0d0; display: flex; align-items: center; gap: 4px; padding: 0 0 1px 7px; letter-spacing: -.05px; }
.shelf .ri { margin-left: -1px; }
.shelf .ri { margin-right: 1px; }
.view { height: 519px; border: 1px solid #d0d0d0; background: #fff; padding: 10px 0 0 10px; }
.view h1 { font: 300 20px/30px Inter, sans-serif; height: 41px; padding-left: 1px; color: #4a4a4a; white-space: nowrap; letter-spacing: .05px; }
#treemap { display: block; margin-left: 3px; }

.showme { position: absolute; left: 1158px; top: -36px; width: 204px; display: flex; flex-direction: column; filter: drop-shadow(2px 2px 1.5px rgba(0,0,0,.4)); }
.sm-tab { width: 111px; height: 37px; margin: 0 0 -1px auto; z-index: 1; background: #fafafa; border: solid #dcdcdc; border-width: 1px 0 0 1px; display: flex; align-items: center; gap: 5px; padding: 0 0 7px 11px; font: 14px/16px Roboto, sans-serif; letter-spacing: -.2px; color: #222; }
.sm-body { height: 556px; background: #fafafa; border: solid #dcdcdc; border-width: 1px 0 0 1px; padding: 14px 0 0 13px; color: #222; }
.thumbs { display: grid; grid-template-columns: 56px 56px 56px; gap: 4px; }
.thumbs svg { width: 56px; height: 42px; background: #fff; box-shadow: inset 0 0 0 1px #dcdcdc; }
.thumbs .on { box-shadow: inset 0 0 0 2px #dc6937; }
.tt { font: 14px "Liberation Sans"; fill: #777; letter-spacing: -.3px; }
.hint { height: 28px; margin-left: 2px; font-size: 12px; display: flex; align-items: center; white-space: pre; letter-spacing: -.15px; }
.hint.h1 { height: 26px; margin-top: 12px; letter-spacing: -.08px; }
.hint b { font-weight: 600; color: #000; }
.hint .pill { padding: 0 2px 0 0; text-align: center; letter-spacing: .05px; }
.q0 { width: 57px; } .q1 { width: 54px; }
.dm { width: 90px; } .ms { width: 79px; }

.tabs { height: 31px; flex: none; display: flex; background: #e5e5e5; border-top: 1px solid #c8c8c8; border-bottom: 1px solid #ccc; line-height: 29px; color: #666; letter-spacing: -.12px; }
.tabs div { border-right: 1px solid #c8c8c8; display: flex; align-items: center; }
.t-ds { width: 131px; padding-left: 9px; gap: 6px; }
.t-s1 { width: 56px; padding-left: 6px; letter-spacing: -.2px; }
.tabs .t-s2 { width: 57px; background: #fafafa; font-weight: 600; color: #4a4a4a; padding: 0 0 2px 5px; letter-spacing: -.1px; }
.tabs .t-i { width: 32px; justify-content: center; }
.status { height: 20px; flex: none; background: #eaeaea; display: flex; align-items: center; font-size: 11px; color: #222; padding-left: 3px; white-space: nowrap; }
.s1 { width: 77px; letter-spacing: -.15px; } .s2 { width: 106px; letter-spacing: -.2px; } .s3 { letter-spacing: -.17px; }
.status svg { margin-left: auto; }

.taskbar { height: 40px; flex: none; display: flex; background: linear-gradient(90deg, #171717 0, #1a1a1a 335px, #1c2427 420px, #22333a 600px, #1d2c2c 800px, #1b2220 960px, #1c1c1c 1080px); color: #fff; font-family: "Open Sans", sans-serif; }
.tb-search { width: 288px; background: #f2f2f2; border: 1px solid #bbb; display: flex; align-items: center; padding-left: 10px; color: #2a2a2a; font-size: 14px; }
.tb-search span { margin-left: 11px; white-space: nowrap; letter-spacing: -.03px; }
.hill { margin: 3px 0 0 auto; }
.badge-s { font: 10px "Open Sans"; fill: #fff; } .badge-1 { font: 600 11px "Open Sans"; fill: #fff; }
.tray { margin-left: auto; display: flex; align-items: center; width: 381px; white-space: nowrap; }
.w1 { font-size: 13.5px; width: 38px; margin-left: 5px; } .w2 { font-size: 13.3px; width: 40px; letter-spacing: -.1px; }
.sys { margin-left: 20px; }
.lang { width: 28px; margin-left: 10px; font-size: 12px; letter-spacing: -.4px; }
.clock { width: 70px; margin-left: 3px; text-align: center; font-size: 12px; line-height: 18px; letter-spacing: -.4px; }
.clock b { display: block; font-weight: 400; }
.notif { margin-left: 3px; }
```
FILE: treemap.js
```js
// Squarified treemap of record counts per date, largest first.
const canvas = document.getElementById('treemap');
const ctx = canvas.getContext('2d');
const W = 736, H = 452, RATIO = 1.61803;
const colors = { 4: '#ab7299', 3: '#d4a2c2', 2: '#d3b95f', 1: '#ac8f24' };
const values = [].concat(Array(6).fill(4), Array(34).fill(3), Array(429).fill(2), Array(4284).fill(1));
const unit = W * H / values.reduce((a, b) => a + b, 0);
const leading = [40, 51, 51, 51, 51, 51, 51, 51, 51, 65];

let x = 0, y = 0, w = W, h = H, i = 0;

function stripLength(side) {
  let best = Infinity, sum = 0, n = 0;
  while (i + n < values.length) {
    sum += values[i + n];
    const depth = sum * unit / side;
    const a = depth * depth / unit;
    const score = Math.max(a / (values[i + n] * RATIO), values[i] * RATIO / a);
    if (score > best) break;
    best = score;
    n++;
  }
  return n;
}

function cell(x0, y0, x1, y1, v) {
  x0 = Math.round(x0); y0 = Math.round(y0); x1 = Math.round(x1); y1 = Math.round(y1);
  ctx.fillStyle = '#000';
  ctx.fillRect(x0, y0, x1 - x0 + 1, y1 - y0 + 1);
  ctx.fillStyle = colors[v];
  ctx.fillRect(x0 + 1, y0 + 1, x1 - x0 - 1, y1 - y0 - 1);
}

while (i < values.length) {
  const vertical = w >= h;
  const side = vertical ? h : w;
  const n = leading.length ? leading.shift() : stripLength(side);
  const strip = values.slice(i, i + n);
  const depth = strip.reduce((a, b) => a + b, 0) * unit / side;
  let p = 0;
  for (const v of strip) {
    const len = v * unit / depth;
    if (vertical) cell(x, y + p, x + depth, y + p + len, v);
    else cell(x + p, y, x + p + len, y + depth, v);
    p += len;
  }
  if (vertical) { x += depth; w -= depth; } else { y += depth; h -= depth; }
  i += n;
}
```
